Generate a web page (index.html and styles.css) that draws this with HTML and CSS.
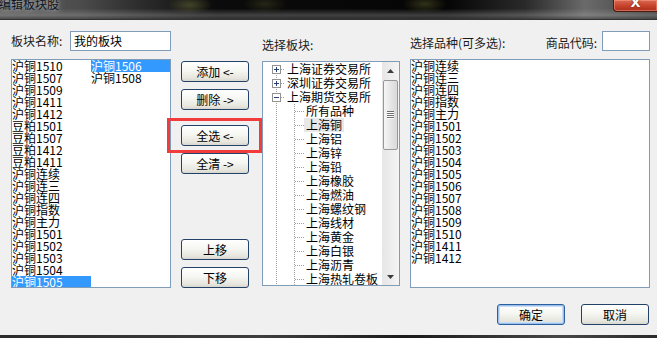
FILE: index.html
```html
<!DOCTYPE html>
<html lang="zh-CN">
<head>
<meta charset="utf-8">
<title>编辑板块股</title>
<link rel="stylesheet" href="styles.css">
</head>
<body>
<div class="window">
  <div class="titlebar">
    <span class="title">编辑板块股</span>
    <span class="close"><span class="close-x">X</span></span>
  </div>
  <div class="dialog">
    <div class="grid">
      <div class="cell-name">
        <span class="label">板块名称:</span>
        <div class="textbox name">我的板块</div>
      </div>
      <div></div>
      <div class="cell-tree-label"><span class="label">选择板块:</span></div>
      <div class="cell-pick">
        <span class="label pick">选择品种(可多选):</span>
        <span class="label code-label">商品代码:</span>
        <div class="textbox code"></div>
      </div>

      <div class="listbox multi">
        <div class="item">沪铜1510</div>
        <div class="item">沪铜1507</div>
        <div class="item">沪铜1509</div>
        <div class="item">沪铜1411</div>
        <div class="item">沪铜1412</div>
        <div class="item">豆粕1501</div>
        <div class="item">豆粕1507</div>
        <div class="item">豆粕1412</div>
        <div class="item">豆粕1411</div>
        <div class="item">沪铜连续</div>
        <div class="item">沪铜连三</div>
        <div class="item">沪铜连四</div>
        <div class="item">沪铜指数</div>
        <div class="item">沪铜主力</div>
        <div class="item">沪铜1501</div>
        <div class="item">沪铜1502</div>
        <div class="item">沪铜1503</div>
        <div class="item">沪铜1504</div>
        <div class="item sel">沪铜1505</div>
        <div class="item sel">沪铜1506</div>
        <div class="item">沪铜1508</div>
      </div>

      <div class="btncol">
        <button class="btn b-add">添加 &lt;-</button>
        <button class="btn b-del">删除 -&gt;</button>
        <button class="btn b-all">全选 &lt;-<span class="annot"></span></button>
        <button class="btn b-clr">全清 -&gt;</button>
        <button class="btn b-up">上移</button>
        <button class="btn b-down">下移</button>
      </div>

      <div class="tree-cell">
        <div class="tree">
          <div class="tree-body">
            <div class="trow root">
              <svg class="exp" width="9" height="9" viewBox="0 0 9 9"><rect x="0.5" y="0.5" width="8" height="8" fill="#fff" stroke="#929292"/><path d="M2 4.5h5M4.5 2v5" stroke="#23407a"/></svg>
              <span class="hl"></span><span class="tlabel">上海证券交易所</span>
            </div>
            <div class="trow root">
              <svg class="exp" width="9" height="9" viewBox="0 0 9 9"><rect x="0.5" y="0.5" width="8" height="8" fill="#fff" stroke="#929292"/><path d="M2 4.5h5M4.5 2v5" stroke="#23407a"/></svg>
              <span class="hl"></span><span class="tlabel">深圳证券交易所</span>
            </div>
            <div class="trow root">
              <svg class="exp" width="9" height="9" viewBox="0 0 9 9"><rect x="0.5" y="0.5" width="8" height="8" fill="#fff" stroke="#929292"/><path d="M2 4.5h5" stroke="#23407a"/></svg>
              <span class="hl"></span><span class="tlabel">上海期货交易所</span>
            </div>
            <div class="children">
              <div class="trow child"><span class="hl"></span><span class="tlabel">所有品种</span></div>
              <div class="trow child"><span class="hl"></span><span class="tlabel sel">上海铜</span></div>
              <div class="trow child"><span class="hl"></span><span class="tlabel">上海铝</span></div>
              <div class="trow child"><span class="hl"></span><span class="tlabel">上海锌</span></div>
              <div class="trow child"><span class="hl"></span><span class="tlabel">上海铅</span></div>
              <div class="trow child"><span class="hl"></span><span class="tlabel">上海橡胶</span></div>
              <div class="trow child"><span class="hl"></span><span class="tlabel">上海燃油</span></div>
              <div class="trow child"><span class="hl"></span><span class="tlabel">上海螺纹钢</span></div>
              <div class="trow child"><span class="hl"></span><span class="tlabel">上海线材</span></div>
              <div class="trow child"><span class="hl"></span><span class="tlabel">上海黄金</span></div>
              <div class="trow child"><span class="hl"></span><span class="tlabel">上海白银</span></div>
              <div class="trow child"><span class="hl"></span><span class="tlabel">上海沥青</span></div>
              <div class="trow child"><span class="hl"></span><span class="tlabel">上海热轧卷板</span></div>
            </div>
          </div>
          <div class="vscroll">
            <div class="sb-btn"><svg width="7" height="4" viewBox="0 0 7 4"><path d="M0 4L3.5 0L7 4Z" fill="#3c3c3c"/></svg></div>
            <div class="thumb">
              <svg width="7" height="8" viewBox="0 0 7 8"><path d="M0 0.5h7M0 2.5h7M0 4.5h7M0 6.5h7" stroke="#6e6e6e"/><path d="M0 1.5h7M0 3.5h7M0 5.5h7M0 7.5h7" stroke="#ffffff"/></svg>
            </div>
            <div class="sb-fill"></div>
            <div class="sb-btn"><svg width="7" height="4" viewBox="0 0 7 4"><path d="M0 0L7 0L3.5 4Z" fill="#3c3c3c"/></svg></div>
          </div>
        </div>
      </div>

      <div class="listbox single">
        <div class="item">沪铜连续</div>
        <div class="item">沪铜连三</div>
        <div class="item">沪铜连四</div>
        <div class="item">沪铜指数</div>
        <div class="item">沪铜主力</div>
        <div class="item">沪铜1501</div>
        <div class="item">沪铜1502</div>
        <div class="item">沪铜1503</div>
        <div class="item">沪铜1504</div>
        <div class="item">沪铜1505</div>
        <div class="item">沪铜1506</div>
        <div class="item">沪铜1507</div>
        <div class="item">沪铜1508</div>
        <div class="item">沪铜1509</div>
        <div class="item">沪铜1510</div>
        <div class="item">沪铜1411</div>
        <div class="item">沪铜1412</div>
      </div>
    </div>

    <div class="footer">
      <button class="btn wide default">确定</button>
      <button class="btn wide">取消</button>
    </div>
  </div>
  <div class="frame-bottom"></div>
</div>
</body>
</html>
```

FILE: styles.css
```css
* { box-sizing: border-box; }
html, body { margin: 0; padding: 0; }
body {
  width: 657px;
  height: 338px;
  overflow: hidden;
  background: #f0f0f0;
  font-family: "Noto Sans CJK SC", "Noto Sans", sans-serif;
  font-size: 12px;
  color: #000;
}

/* ---------- title bar ---------- */
.titlebar {
  height: 20px;
  display: flex;
  justify-content: space-between;
  align-items: flex-start;
  border-bottom: 1px solid #333;
  overflow: hidden;
  background:
    linear-gradient(to bottom, rgba(0,0,0,0) 0%, rgba(0,0,0,0) 45%, rgba(170,170,170,.35) 80%, rgba(70,70,70,.6) 100%),
    radial-gradient(ellipse 22px 9px at 190px 5px, rgba(150,150,70,.35), transparent),
    radial-gradient(ellipse 22px 9px at 425px 4px, rgba(150,150,70,.3), transparent),
    radial-gradient(ellipse 22px 9px at 265px 4px, rgba(120,120,60,.25), transparent),
    linear-gradient(to right, #5a5a5a 0%, #4c4c4c 12%, #2a2a2a 22%, #0b0b0b 33%, #050505 68%, #2a2a2a 80%, #6a6a6a 89%, #404040 100%);
}
.title {
  margin-top: -2px;
  margin-left: -1px;
  font-size: 12px;
  line-height: 12px;
  color: #0d1624;
  text-shadow: 0 0 4px rgba(210,210,210,.85), 0 0 8px rgba(210,210,210,.5);
}
.close {
  width: 44px;
  height: 12px;
  display: flex;
  justify-content: center;
  align-items: flex-end;
  overflow: hidden;
  border: 1px solid #4a1910;
  border-top: none;
  border-right: none;
  border-bottom-left-radius: 4px;
  background: linear-gradient(#dc6a52, #c5412a 55%, #a8301d);
  box-shadow: inset 0 0 0 1px rgba(255,170,150,.45);
}
.close-x {
  color: #fff;
  font: bold 13px/13px "DejaVu Sans", sans-serif;
  margin-bottom: 2px;
  text-shadow: 0 0 2px #5a1a10;
}

/* ---------- dialog ---------- */
.dialog {
  height: 315px;
  padding: 11px 8px 0 11px;
  display: flex;
  flex-direction: column;
}
.grid {
  display: grid;
  grid-template-columns: 160px 91px 148px 240px;
  grid-template-rows: 20px 229px;
  row-gap: 8px;
}
.label {
  line-height: 14px;
  white-space: nowrap;
  color: #1b1b1b;
}
.cell-name {
  display: flex;
  align-items: center;
  justify-content: space-between;
}
.cell-tree-label { padding-top: 5px; }
.cell-pick {
  display: flex;
  align-items: flex-start;
}
.cell-pick .label { margin-top: 5px; }
.code-label { margin-left: auto; }
.textbox {
  height: 20px;
  border: 1px solid #7f9db9;
  background: #fff;
  line-height: 18px;
  padding-left: 3px;
  white-space: nowrap;
}
.textbox.name { width: 101px; }
.textbox.code { width: 48px; margin-left: 5px; }

/* ---------- list boxes ---------- */
.listbox {
  border: 1px solid #7f9db9;
  background: #fff;
  overflow: hidden;
  display: grid;
  grid-template-rows: repeat(19, 12px);
  grid-auto-flow: column;
  align-content: start;
}
.listbox.multi { grid-auto-columns: 79px; }
.listbox.single { grid-auto-columns: 100%; }
.item {
  height: 12px;
  line-height: 12px;
  white-space: nowrap;
  overflow: hidden;
}
.item.sel {
  background: #3399ff;
  color: #fff;
}

/* ---------- buttons ---------- */
.btn {
  width: 68px;
  height: 21px;
  padding: 0;
  font-family: inherit;
  font-size: 12px;
  line-height: 19px;
  color: #000;
  text-align: center;
  white-space: pre;
  border: 1px solid #23426a;
  border-radius: 3px;
  background: linear-gradient(#ffffff, #f6f6f2 45%, #e6e6de 85%, #d6d6ce);
}
.btncol {
  display: flex;
  flex-direction: column;
  padding-left: 10px;
}
.b-add { margin-top: 2px; }
.b-del { margin-top: 7px; }
.b-all { margin-top: 15px; position: relative; }
.b-clr { margin-top: 7px; }
.b-up { margin-top: auto; }
.b-down { margin-top: 7px; }
.annot {
  position: absolute;
  left: -15px;
  top: -8px;
  width: 95px;
  height: 35px;
  border: 3px solid #f23b3b;
  z-index: 5;
}

/* ---------- tree ---------- */
.tree {
  margin-top: 2px;
  width: 138px;
  height: 225px;
  border: 1px solid #7f9db9;
  background: #fff;
  display: flex;
}
.tree-body {
  flex: 1;
  overflow: hidden;
  background-image: repeating-linear-gradient(to bottom, #a0a0a0 0 1px, transparent 1px 2px);
  background-size: 1px 100%;
  background-position: 13px 7px;
  background-repeat: no-repeat;
}
.trow {
  height: 14px;
  display: flex;
  align-items: center;
  white-space: nowrap;
}
.trow.root { padding-left: 9px; }
.exp { flex: none; display: block; }
.hl {
  flex: none;
  height: 1px;
  background-image: repeating-linear-gradient(to right, #a0a0a0 0 1px, transparent 1px 2px);
}
.root .hl { width: 4px; }
.child .hl { width: 9px; }
.tlabel {
  padding: 0 2px;
  line-height: 14px;
}
.tlabel.sel { background: #e8e8e8; }
.children {
  background-image: repeating-linear-gradient(to bottom, #a0a0a0 0 1px, transparent 1px 2px);
  background-size: 1px 100%;
  background-position: 31px 0;
  background-repeat: no-repeat;
}
.trow.child { padding-left: 32px; }

.vscroll {
  width: 17px;
  flex: none;
  display: flex;
  flex-direction: column;
  background: linear-gradient(to right, #e6e6e6, #f4f4f4);
}
.sb-btn {
  height: 17px;
  flex: none;
  display: flex;
  align-items: center;
  justify-content: center;
}
.thumb {
  margin: 1px 1px 0;
  height: 70px;
  flex: none;
  border: 1px solid #979797;
  border-radius: 2px;
  background: linear-gradient(to right, #f6f6f6, #e6e6e6 50%, #d9d9d9);
  display: flex;
  align-items: center;
  justify-content: center;
}
.sb-fill { flex: 1; }

/* ---------- footer ---------- */
.footer {
  margin-top: 16px;
  display: flex;
  justify-content: flex-end;
  gap: 16px;
}
.btn.default {
  border-color: #2c5f9e;
  box-shadow: inset 0 0 0 1px #9cc0ee, inset 0 0 0 2px #c9ddf6;
}
.frame-bottom {
  height: 3px;
  background: linear-gradient(to right, #2c2c2c, #3e3e3e 40%, #1b1b1b 62%, #474747 85%, #2a2a2a);
}
```
